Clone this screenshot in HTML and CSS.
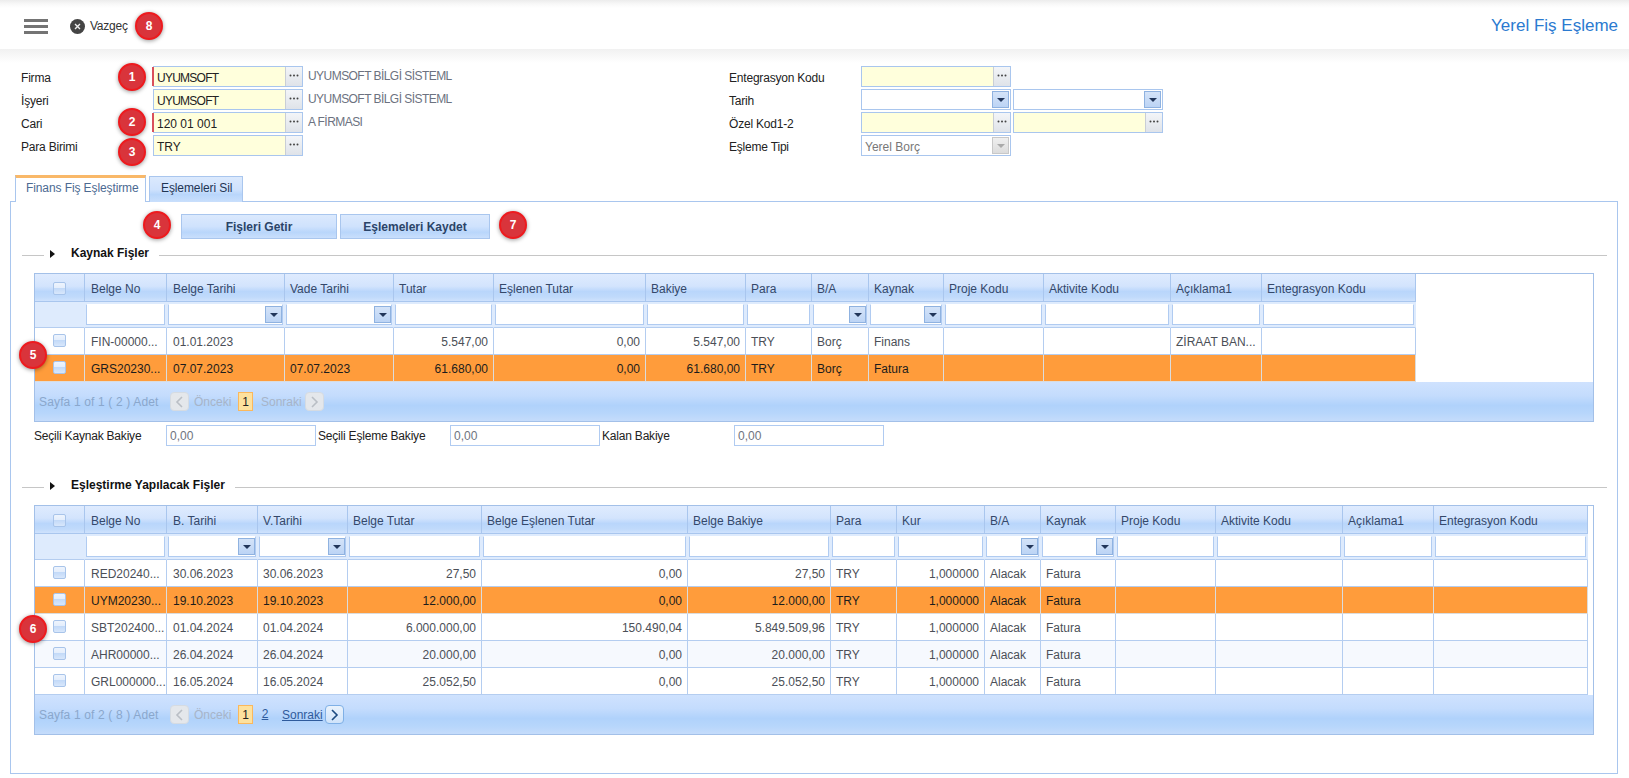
FILE: index.html
```html
<!DOCTYPE html>
<html lang="tr">
<head>
<meta charset="utf-8">
<title>Yerel Fiş Eşleme</title>
<link rel="stylesheet" href="styles.css">
</head>
<body>
<div class="page">
  <header class="topbar">
    <div class="menu"><i></i><i></i><i></i></div>
    <div class="cancel">
      <svg class="cancel-ico" viewBox="0 0 15 15" width="15" height="15"><circle cx="7.5" cy="7.5" r="7.5" fill="#444"/><path d="M5 5l5 5M10 5l-5 5" stroke="#eee" stroke-width="1.4"/></svg>
      <span>Vazgeç</span>
    </div>
    <h1 class="title">Yerel Fiş Eşleme</h1>
  </header>

  <main class="main">
    <section class="form">
      <div class="fcol">
        <div class="frow"><label>Firma</label><div class="field req"><span class="val yellow cap">UYUMSOFT</span><span class="dots"><svg width="10" height="3"><circle cx="1.5" cy="1.5" r="1"/><circle cx="5" cy="1.5" r="1"/><circle cx="8.5" cy="1.5" r="1"/></svg></span></div><span class="desc">UYUMSOFT BİLGİ SİSTEML</span></div>
        <div class="frow"><label>İşyeri</label><div class="field"><span class="val yellow cap">UYUMSOFT</span><span class="dots"><svg width="10" height="3"><circle cx="1.5" cy="1.5" r="1"/><circle cx="5" cy="1.5" r="1"/><circle cx="8.5" cy="1.5" r="1"/></svg></span></div><span class="desc">UYUMSOFT BİLGİ SİSTEML</span></div>
        <div class="frow"><label>Cari</label><div class="field req"><span class="val yellow">120 01 001</span><span class="dots"><svg width="10" height="3"><circle cx="1.5" cy="1.5" r="1"/><circle cx="5" cy="1.5" r="1"/><circle cx="8.5" cy="1.5" r="1"/></svg></span></div><span class="desc">A FİRMASI</span></div>
        <div class="frow"><label>Para Birimi</label><div class="field"><span class="val yellow">TRY</span><span class="dots"><svg width="10" height="3"><circle cx="1.5" cy="1.5" r="1"/><circle cx="5" cy="1.5" r="1"/><circle cx="8.5" cy="1.5" r="1"/></svg></span></div></div>
      </div>
      <div class="fcol right">
        <div class="frow"><label>Entegrasyon Kodu</label><div class="field"><span class="val yellow"></span><span class="dots"><svg width="10" height="3"><circle cx="1.5" cy="1.5" r="1"/><circle cx="5" cy="1.5" r="1"/><circle cx="8.5" cy="1.5" r="1"/></svg></span></div></div>
        <div class="frow"><label>Tarih</label><div class="field"><span class="val"></span><span class="combo"><b></b></span></div><div class="field"><span class="val"></span><span class="combo"><b></b></span></div></div>
        <div class="frow"><label>Özel Kod1-2</label><div class="field"><span class="val yellow"></span><span class="dots"><svg width="10" height="3"><circle cx="1.5" cy="1.5" r="1"/><circle cx="5" cy="1.5" r="1"/><circle cx="8.5" cy="1.5" r="1"/></svg></span></div><div class="field"><span class="val yellow"></span><span class="dots"><svg width="10" height="3"><circle cx="1.5" cy="1.5" r="1"/><circle cx="5" cy="1.5" r="1"/><circle cx="8.5" cy="1.5" r="1"/></svg></span></div></div>
        <div class="frow"><label>Eşleme Tipi</label><div class="field"><span class="val muted">Yerel Borç</span><span class="combo off"><b></b></span></div></div>
      </div>
    </section>

    <nav class="tabs">
      <span class="tab active">Finans Fiş Eşleştirme</span>
      <span class="tab">Eşlemeleri Sil</span>
    </nav>

    <section class="panel">
      <div class="actions">
        <button class="btn b-get" type="button">Fişleri Getir</button>
        <button class="btn b-save" type="button">Eşlemeleri Kaydet</button>
      </div>

      <div class="legend first"><i class="ln short"></i><i class="tri"></i><strong>Kaynak Fişler</strong><i class="ln"></i></div>

      <div class="gridbox">
        <table class="gt t1">
          <colgroup><col class="w50"><col class="w82"><col class="w118"><col class="w109"><col class="w100"><col class="w152"><col class="w100"><col class="w66"><col class="w57"><col class="w75"><col class="w100"><col class="w127"><col class="w91"><col class="w154"></colgroup>
          <thead>
            <tr class="hd"><th class="c"><span class="cb"></span></th><th>Belge No</th><th>Belge Tarihi</th><th>Vade Tarihi</th><th>Tutar</th><th>Eşlenen Tutar</th><th>Bakiye</th><th>Para</th><th>B/A</th><th>Kaynak</th><th>Proje Kodu</th><th>Aktivite Kodu</th><th>Açıklama1</th><th>Entegrasyon Kodu</th></tr>
            <tr class="flt"><td></td><td><span class="fi"></span></td><td><span class="fi"><span class="combo"><b></b></span></span></td><td><span class="fi"><span class="combo"><b></b></span></span></td><td><span class="fi"></span></td><td><span class="fi"></span></td><td><span class="fi"></span></td><td><span class="fi"></span></td><td><span class="fi"><span class="combo"><b></b></span></span></td><td><span class="fi"><span class="combo"><b></b></span></span></td><td><span class="fi"></span></td><td><span class="fi"></span></td><td><span class="fi"></span></td><td><span class="fi"></span></td></tr>
          </thead>
          <tbody>
            <tr><td class="c"><span class="cb"></span></td><td>FIN-00000...</td><td>01.01.2023</td><td></td><td class="n">5.547,00</td><td class="n">0,00</td><td class="n">5.547,00</td><td>TRY</td><td>Borç</td><td>Finans</td><td></td><td></td><td>ZİRAAT BAN...</td><td></td></tr>
            <tr class="sel"><td class="c"><span class="cb"></span></td><td>GRS20230...</td><td>07.07.2023</td><td>07.07.2023</td><td class="n">61.680,00</td><td class="n">0,00</td><td class="n">61.680,00</td><td>TRY</td><td>Borç</td><td>Fatura</td><td></td><td></td><td></td><td></td></tr>
          </tbody>
        </table>
        <div class="pager">
          <span class="info">Sayfa 1 of 1 ( 2 ) Adet</span>
          <span class="pb off"><svg width="9" height="12" viewBox="0 0 9 12"><path d="M7 1L2 6l5 5" fill="none" stroke="#b9bec5" stroke-width="1.6"/></svg></span>
          <span class="plabel off">Önceki</span>
          <span class="pn cur">1</span>
          <span class="plabel off next1">Sonraki</span>
          <span class="pb off"><svg width="9" height="12" viewBox="0 0 9 12"><path d="M2 1l5 5-5 5" fill="none" stroke="#b9bec5" stroke-width="1.6"/></svg></span>
        </div>
      </div>

      <div class="summary">
        <label class="s1">Seçili Kaynak Bakiye</label><span class="sval">0,00</span>
        <label class="s2">Seçili Eşleme Bakiye</label><span class="sval">0,00</span>
        <label class="s2">Kalan Bakiye</label><span class="sval">0,00</span>
      </div>

      <div class="legend second"><i class="ln short"></i><i class="tri"></i><strong>Eşleştirme Yapılacak Fişler</strong><i class="ln"></i></div>

      <div class="gridbox">
        <table class="gt t2">
          <colgroup><col class="w50"><col class="w82"><col class="w91"><col class="w90"><col class="w134"><col class="w206"><col class="w143"><col class="w66"><col class="w88"><col class="w56"><col class="w75"><col class="w100"><col class="w127"><col class="w91"><col class="w154"></colgroup>
          <thead>
            <tr class="hd"><th class="c"><span class="cb"></span></th><th>Belge No</th><th>B. Tarihi</th><th>V.Tarihi</th><th>Belge Tutar</th><th>Belge Eşlenen Tutar</th><th>Belge Bakiye</th><th>Para</th><th>Kur</th><th>B/A</th><th>Kaynak</th><th>Proje Kodu</th><th>Aktivite Kodu</th><th>Açıklama1</th><th>Entegrasyon Kodu</th></tr>
            <tr class="flt"><td></td><td><span class="fi"></span></td><td><span class="fi"><span class="combo"><b></b></span></span></td><td><span class="fi"><span class="combo"><b></b></span></span></td><td><span class="fi"></span></td><td><span class="fi"></span></td><td><span class="fi"></span></td><td><span class="fi"></span></td><td><span class="fi"></span></td><td><span class="fi"><span class="combo"><b></b></span></span></td><td><span class="fi"><span class="combo"><b></b></span></span></td><td><span class="fi"></span></td><td><span class="fi"></span></td><td><span class="fi"></span></td><td><span class="fi"></span></td></tr>
          </thead>
          <tbody>
            <tr><td class="c"><span class="cb"></span></td><td>RED20240...</td><td>30.06.2023</td><td>30.06.2023</td><td class="n">27,50</td><td class="n">0,00</td><td class="n">27,50</td><td>TRY</td><td class="n">1,000000</td><td>Alacak</td><td>Fatura</td><td></td><td></td><td></td><td></td></tr>
            <tr class="sel"><td class="c"><span class="cb"></span></td><td>UYM20230...</td><td>19.10.2023</td><td>19.10.2023</td><td class="n">12.000,00</td><td class="n">0,00</td><td class="n">12.000,00</td><td>TRY</td><td class="n">1,000000</td><td>Alacak</td><td>Fatura</td><td></td><td></td><td></td><td></td></tr>
            <tr><td class="c"><span class="cb"></span></td><td>SBT202400...</td><td>01.04.2024</td><td>01.04.2024</td><td class="n">6.000.000,00</td><td class="n">150.490,04</td><td class="n">5.849.509,96</td><td>TRY</td><td class="n">1,000000</td><td>Alacak</td><td>Fatura</td><td></td><td></td><td></td><td></td></tr>
            <tr class="alt"><td class="c"><span class="cb"></span></td><td>AHR00000...</td><td>26.04.2024</td><td>26.04.2024</td><td class="n">20.000,00</td><td class="n">0,00</td><td class="n">20.000,00</td><td>TRY</td><td class="n">1,000000</td><td>Alacak</td><td>Fatura</td><td></td><td></td><td></td><td></td></tr>
            <tr><td class="c"><span class="cb"></span></td><td>GRL000000...</td><td>16.05.2024</td><td>16.05.2024</td><td class="n">25.052,50</td><td class="n">0,00</td><td class="n">25.052,50</td><td>TRY</td><td class="n">1,000000</td><td>Alacak</td><td>Fatura</td><td></td><td></td><td></td><td></td></tr>
          </tbody>
        </table>
        <div class="pager">
          <span class="info">Sayfa 1 of 2 ( 8 ) Adet</span>
          <span class="pb off"><svg width="9" height="12" viewBox="0 0 9 12"><path d="M7 1L2 6l5 5" fill="none" stroke="#b9bec5" stroke-width="1.6"/></svg></span>
          <span class="plabel off">Önceki</span>
          <span class="pn cur">1</span>
          <span class="pn link">2</span>
          <span class="plabel link next2">Sonraki</span>
          <span class="pb on"><svg width="9" height="12" viewBox="0 0 9 12"><path d="M2 1l5 5-5 5" fill="none" stroke="#1c4a80" stroke-width="1.6"/></svg></span>
        </div>
      </div>
    </section>
  </main>

  <span class="badge bd1">1</span>
  <span class="badge bd2">2</span>
  <span class="badge bd3">3</span>
  <span class="badge bd4">4</span>
  <span class="badge bd5">5</span>
  <span class="badge bd6">6</span>
  <span class="badge bd7">7</span>
  <span class="badge bd8">8</span>
</div>
</body>
</html>
```
FILE: styles.css
```css
* { box-sizing: border-box; }
html, body { margin: 0; padding: 0; background: #fff; }
body { font: 12px/16px "Liberation Sans", Arial, sans-serif; color: #222; overflow: hidden; }
.page { position: relative; width: 1629px; height: 778px; overflow: hidden; }

/* top bar */
.topbar { height: 49px; display: flex; align-items: center; background: linear-gradient(#ececec 0, #f8f8f8 4px, #fff 8px); padding: 3px 11px 0 24px; }
.menu { width: 24px; display: flex; flex-direction: column; gap: 3px; }
.menu i { display: block; height: 3px; background: #747474; }
.cancel { display: flex; align-items: center; gap: 5px; margin-left: 22px; color: #333; letter-spacing: -.25px; }
.title { margin: 0 0 0 auto; font-size: 17px; font-weight: 400; line-height: 22px; color: #2b7ad0; }

/* form */
.main { background: linear-gradient(#f1f1f1 0, #fff 14px) no-repeat; }
.form { display: flex; padding: 17px 0 0 21px; height: 126px; }
.fcol { width: 708px; display: flex; flex-direction: column; gap: 2px; }
.frow { display: flex; align-items: center; height: 21px; }
.frow label { width: 132px; padding-top: 3px; letter-spacing: -.2px; }
.fcol .field + .field { margin-left: 2px; }
.field { width: 150px; height: 21px; display: flex; border: 1px solid #a9c6ee; background: #fff; position: relative; }
.field.req::before { content: ""; position: absolute; left: -2px; top: 0; bottom: 0; width: 2px; background: #d9505c; }
.val { flex: 1; padding: 2px 3px 0; line-height: 19px; color: #222; white-space: nowrap; overflow: hidden; }
.val.cap { letter-spacing: -.75px; }
.val.yellow { background: #ffffdc; }
.val.muted { color: #777; }
.dots { width: 17px; display: flex; align-items: center; justify-content: center; padding-bottom: 2px; background: linear-gradient(#f3f5f8, #dfe3e9); border-left: 1px solid #c9ced6; }
.dots svg { fill: #444; display: block; }
.combo { width: 17px; height: 17px; margin: 1px; display: flex; align-items: center; justify-content: center; background: linear-gradient(#d4e3f8, #bcd4f5); border: 1px solid #8fb2e0; }
.combo b { width: 0; height: 0; border: 4px solid transparent; border-top: 4px solid #22365a; border-bottom: 0; }
.combo.off { background: linear-gradient(#efefef, #dcdcdc); border-color: #c8c8c8; }
.combo.off b { border-top-color: #aaa; }
.desc { margin-left: 5px; color: #6c7280; margin-top: -1px; letter-spacing: -.55px; }

/* tabs */
.tabs { display: flex; gap: 3px; margin-left: 15px; height: 27px; align-items: flex-end; position: relative; z-index: 1; margin-bottom: -1px; }
.tab { height: 26px; padding: 3px 10px 0 11px; border: 1px solid #a9c6ee; border-bottom: 0; background: linear-gradient(#dbe9fd, #cfe2fd 50%, #b9d6fb 70%, #c9dffc); color: #1f3554; letter-spacing: -.1px; }
.tab.active { height: 27px; width: 131px; padding: 2px 0 0 10px; border-top: 3px solid #f9b868; background: #fff; color: #4c6a92; white-space: nowrap; letter-spacing: -.1px; }

/* panel */
.panel { margin-left: 10px; width: 1608px; height: 573px; border: 1px solid #a9c6ee; padding: 12px 0 0 11px; }
.actions { display: flex; gap: 3px; margin-left: 159px; }
.btn { height: 25px; padding: 0; font: bold 12px "Liberation Sans", Arial, sans-serif; color: #2b4468; border: 1px solid #a9c6ee; background: linear-gradient(#dbe9fd, #cfe2fd 50%, #b9d6fb 75%, #c9dffc); }
.b-get { width: 156px; }
.b-save { width: 150px; }

.legend { display: flex; align-items: center; width: 1585px; height: 16px; }
.legend.first { margin-top: 8px; margin-bottom: 10px; }
.legend.second { margin-top: 33px; margin-bottom: 10px; }
.legend strong { color: #111; margin: -5px 10px 0 0; white-space: nowrap; }
.ln { flex: 1; height: 1px; background: #c6c6c6; }
.ln.short { flex: none; width: 22px; }
.tri { width: 0; height: 0; border: 4px solid transparent; border-left: 5px solid #111; border-right: 0; margin: -3px 16px 0 6px; }

/* grids */
.gridbox { margin-left: 12px; width: 1560px; border: 1px solid #a3c0e8; }
.gt { border-collapse: separate; border-spacing: 0; table-layout: fixed; }
.t1 { width: 1381px; }
.t2 { width: 1553px; }
.w50 { width: 50px; } .w56 { width: 56px; } .w57 { width: 57px; } .w66 { width: 66px; } .w75 { width: 75px; }
.w82 { width: 82px; } .w88 { width: 88px; } .w90 { width: 90px; } .w91 { width: 91px; } .w100 { width: 100px; }
.w109 { width: 109px; } .w118 { width: 118px; } .w127 { width: 127px; } .w134 { width: 134px; } .w143 { width: 143px; }
.w152 { width: 152px; } .w154 { width: 154px; } .w206 { width: 206px; }
.gt th, .gt td { border-right: 1px solid #b4cdf0; border-bottom: 1px solid #b4cdf0; padding: 0 5px; white-space: nowrap; overflow: hidden; }
.gt th { height: 28px; padding-top: 2px; font-weight: 400; text-align: left; color: #34486a; background: linear-gradient(#dfebfe, #d3e4fd 45%, #b9d6fb 65%, #c0daFB 85%, #cfe2fd); border-right-color: #a9c6ee; border-bottom-color: #a9c6ee; }
.flt td { height: 26px; padding: 0 1px; background: #deebfd; vertical-align: middle; border-right-color: #deebfd; }
.gt tbody td { height: 27px; padding-top: 2px; color: #4b4f57; background: #fff; }
.gt tbody .alt td { background: #f6f9fe; }
.gt tbody .sel td { background: #ff9c3b; color: #1c1c1c; border-color: #dcdcdc; }
.gt .n { text-align: right; }
.gt th.c { text-align: center; padding: 0; }
.gt tbody td.c { text-align: center; padding: 0 0 2px; }
.gt th:nth-child(2), .gt th:nth-child(3), .gt tbody td:nth-child(2), .gt tbody td:nth-child(3) { padding-left: 6px; }
.cb { display: inline-block; vertical-align: middle; width: 13px; height: 13px; border: 1px solid #a8c4ea; border-radius: 2px; background: linear-gradient(#eef4fd 0, #e4eefc 45%, #c3daf8 50%, #d8e7fb 100%); }
.fi { display: flex; justify-content: flex-end; align-items: center; height: 21px; border: 1px solid #b0cbf1; border-top-color: #fff; background: #fff; }
.fi .combo { margin: 0; }

.pager { height: 39px; display: flex; align-items: center; padding-left: 4px; background: linear-gradient(#cfe2fe, #c4dcfd 35%, #b0d2fb 60%, #b7d6fb 80%, #c5dcfb); color: #8aa7cc; }
.info { width: 131px; letter-spacing: .15px; }
.pb { width: 19px; height: 19px; display: flex; align-items: center; justify-content: center; border-radius: 4px; border: 1px solid #d5dbe2; background: #e4e7eb; }
.pb.on { border-color: #7fb0e6; background: linear-gradient(#e9f2fc, #cfe3fa); }
.plabel.off { color: #a7b4c8; margin-left: 5px; width: 44px; }
.pn { width: 15px; height: 19px; text-align: center; line-height: 18px; margin-left: 0; }
.pn.cur { background: #fde19e; border: 1px solid #fbb85c; color: #222; }
.link { color: #2f5b9c; text-decoration: underline; }
.pn.link { margin-left: 6px; width: 12px; }
.plabel.next1 { margin: 0 4px 0 8px; width: 40px; }
.plabel.next2 { margin: 0 4px 0 11px; width: 39px; }

.summary { display: flex; align-items: center; margin: 2px 0 0 12px; height: 22px; }
.summary label { white-space: nowrap; color: #222; padding-top: 1px; letter-spacing: -.2px; }
.s1 { width: 132px; }
.s2 { width: 132px; margin-left: 2px; }
.sval { width: 150px; height: 21px; border: 1px solid #b0cbf1; padding: 1px 3px 0; line-height: 19px; color: #6e7480; }

/* numbered callouts */
.badge { position: absolute; width: 28px; height: 28px; border-radius: 50%; border: 2px solid #ee1a1e; background: #d9343b; color: #fff; font-weight: 700; font-size: 12px; line-height: 24px; text-align: center; box-shadow: 0 1px 4px rgba(0,0,0,.4); }
.bd1 { left: 118px; top: 63px; }
.bd2 { left: 118px; top: 108px; }
.bd3 { left: 118px; top: 138px; }
.bd4 { left: 143px; top: 211px; }
.bd5 { left: 19px; top: 341px; }
.bd6 { left: 19px; top: 615px; }
.bd7 { left: 499px; top: 211px; }
.bd8 { left: 135px; top: 12px; }
```
